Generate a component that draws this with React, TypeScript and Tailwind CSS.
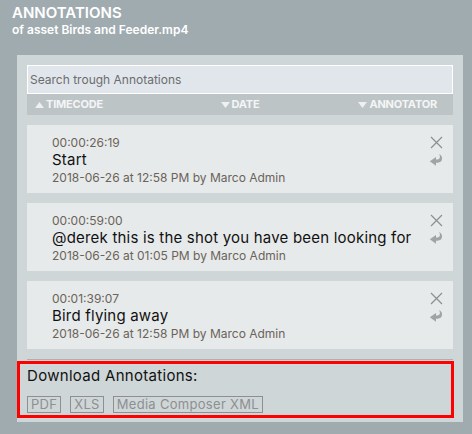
import React from "react";

const notes = [
  { tc: "00:00:26:19", text: "Start", date: "2018-06-26 at 12:58 PM by Marco Admin" },
  { tc: "00:00:59:00", text: "@derek this is the shot you have been looking for", date: "2018-06-26 at 01:05 PM by Marco Admin" },
  { tc: "00:01:39:07", text: "Bird flying away", date: "2018-06-26 at 12:58 PM by Marco Admin" },
];

function CloseIcon() {
  return (
    <svg width="13" height="13" viewBox="0 0 13 13" className="block">
      <path d="M1 1 L12 12 M12 1 L1 12" stroke="#8c8f91" strokeWidth="1.2" fill="none" />
    </svg>
  );
}

function ReplyIcon() {
  return (
    <svg width="14" height="12" viewBox="0 0 14 12" className="block">
      <path
        d="M10 0 C12.8 1.2 13.8 4.2 12.6 6.4 C11.6 8.2 9.4 8.8 7 8.8 L7 11.8 L0.8 7.3 L7 3 L7 5.6 C9 5.6 10.2 5.1 10.7 4 C11.2 2.8 10.9 1.3 10 0 Z"
        fill="#a0a4a6"
      />
    </svg>
  );
}

function Tri({ up }: { up?: boolean }) {
  return (
    <svg width="9" height="6" viewBox="0 0 9 6" className="mr-[2px]">
      {up ? <path d="M0 6 L4.5 0 L9 6 Z" fill="#eef0f1" /> : <path d="M0 0 L9 0 L4.5 6 Z" fill="#eef0f1" />}
    </svg>
  );
}

export default function App() {
  return (
    <div className="w-[472px] h-[434px] bg-[#a0abb0] overflow-hidden" style={{ fontFamily: "Inter, 'Noto Sans', sans-serif" }}>
      <div className="pl-[12px] pt-[4px] h-[55px] text-white">
        <div className="text-[15px] leading-[18px] font-semibold">ANNOTATIONS</div>
        <div className="text-[12px] leading-[15px] font-semibold">of asset Birds and Feeder.mp4</div>
      </div>
      <div className="ml-[17px] w-[446px] h-[367px] bg-[#cfd6d8] px-[10px] pt-[10px]">
        <div className="h-[29px] bg-[#e1e6ec] border border-white flex items-center px-[2px] text-[12px] text-[#6c6c6c]">
          Search trough Annotations
        </div>
        <div className="h-[21px] bg-[#bdc4c6] grid grid-cols-3 items-center text-[11px] font-bold text-[#f4f5f6] tracking-[-0.2px]">
          <div className="flex items-center pl-[8px]"><Tri up />TIMECODE</div>
          <div className="flex items-center justify-center"><Tri />DATE</div>
          <div className="flex items-center justify-end pr-[16px]"><Tri />ANNOTATOR</div>
        </div>
        <div className="h-[244px] overflow-hidden pt-[10px] flex flex-col gap-[10px]">
          {notes.map((n) => (
            <div key={n.tc} className="h-[68px] shrink-0 bg-[#e7eaeb] pl-[25px] pr-[10px] pt-[10px] flex">
              <div className="flex-1 min-w-0">
                <div className="text-[12px] leading-[16px] text-[#6a6359]">{n.tc}</div>
                <div className="text-[15px] leading-[18px] text-[#111] whitespace-nowrap tracking-[0.2px]">{n.text}</div>
                <div className="text-[12px] leading-[18px] text-[#6a6359]">{n.date}</div>
              </div>
              <div className="flex flex-col items-center gap-[5px] pt-[1px] w-[14px]">
                <CloseIcon />
                <ReplyIcon />
              </div>
            </div>
          ))}
        </div>
        <div className="h-px bg-[#a9b1b4]" />
        <div className="-ml-[10px] mt-[1px] w-[437px] h-[57px] border-[3px] border-[#ff0000] pl-[7px] pt-[2px]">
          <div className="text-[15px] leading-[20px] text-[#111] tracking-[0.3px]">Download Annotations:</div>
          <div className="flex gap-[9px] mt-[10px]">
            {["PDF", "XLS", "Media Composer XML"].map((b) => (
              <div key={b} className="h-[17px] border border-[#8d8f90] px-[3px] text-[13px] leading-[15px] text-[#8d8f90] tracking-[0.3px]">
                {b}
              </div>
            ))}
          </div>
        </div>
      </div>
    </div>
  );
}
